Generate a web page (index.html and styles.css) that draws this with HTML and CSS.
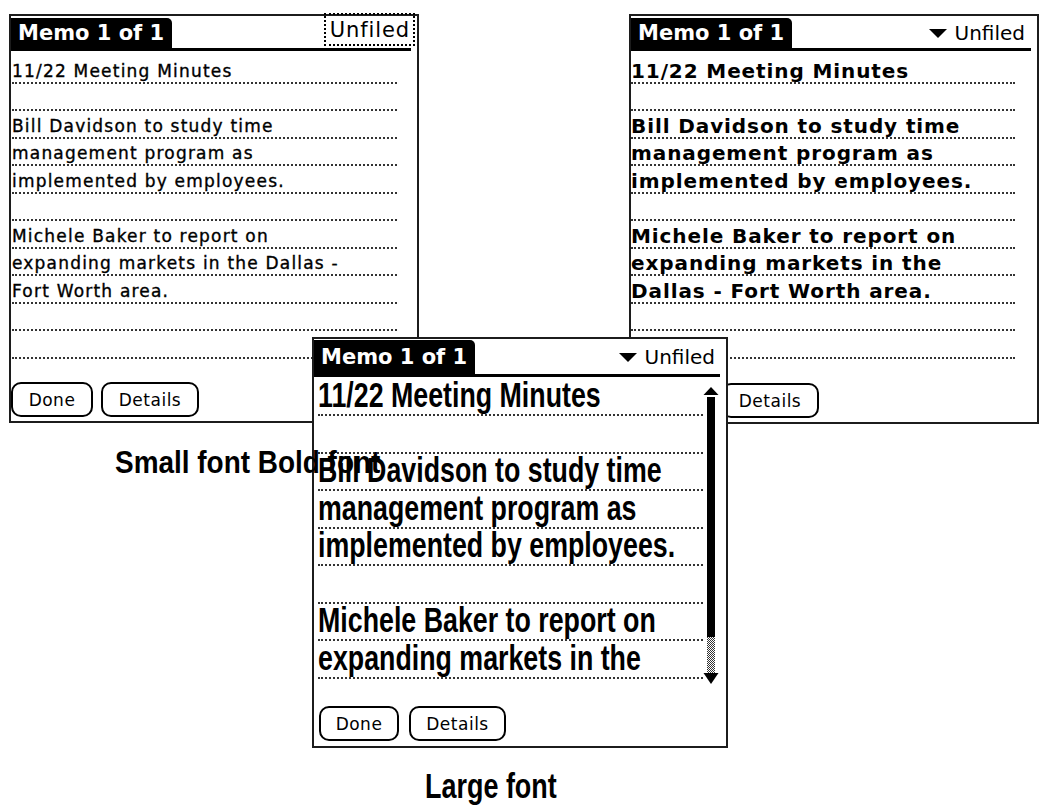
FILE: index.html
```html
<!DOCTYPE html>
<html lang="en">
<head>
<meta charset="utf-8">
<title>Memo fonts</title>
<link rel="stylesheet" href="styles.css">
</head>
<body>
<div class="canvas">

  <section class="screen screen-small">
    <header class="titlebar">
      <div class="tab">Memo 1 of 1</div>
      <div class="category focus">Unfiled</div>
    </header>
    <div class="body">
      <div class="lines">
        <div class="line"><span>11/22 Meeting Minutes</span></div>
        <div class="line"></div>
        <div class="line"><span>Bill Davidson to study time</span></div>
        <div class="line"><span>management program as</span></div>
        <div class="line"><span>implemented by employees.</span></div>
        <div class="line"></div>
        <div class="line"><span>Michele Baker to report on</span></div>
        <div class="line"><span>expanding markets in the Dallas -</span></div>
        <div class="line"><span>Fort Worth area.</span></div>
        <div class="line"></div>
        <div class="line"></div>
      </div>
      <div class="scroll"></div>
    </div>
    <footer class="buttons">
      <div class="btn btn-done">Done</div>
      <div class="btn btn-details">Details</div>
    </footer>
  </section>

  <section class="screen screen-bold">
    <header class="titlebar">
      <div class="tab">Memo 1 of 1</div>
      <div class="category"><span class="tri"></span>Unfiled</div>
    </header>
    <div class="body">
      <div class="lines">
        <div class="line"><span>11/22 Meeting Minutes</span></div>
        <div class="line"></div>
        <div class="line"><span>Bill Davidson to study time</span></div>
        <div class="line"><span>management program as</span></div>
        <div class="line"><span>implemented by employees.</span></div>
        <div class="line"></div>
        <div class="line"><span>Michele Baker to report on</span></div>
        <div class="line"><span>expanding markets in the</span></div>
        <div class="line"><span>Dallas - Fort Worth area.</span></div>
        <div class="line"></div>
        <div class="line"></div>
      </div>
      <div class="scroll"></div>
    </div>
    <footer class="buttons">
      <div class="btn btn-done">Done</div>
      <div class="btn btn-details">Details</div>
    </footer>
  </section>

  <section class="screen screen-large">
    <header class="titlebar">
      <div class="tab">Memo 1 of 1</div>
      <div class="category"><span class="tri"></span>Unfiled</div>
    </header>
    <div class="body">
      <div class="lines">
        <div class="line"><span>11/22 Meeting Minutes</span></div>
        <div class="line"></div>
        <div class="line"><span>Bill Davidson to study time</span></div>
        <div class="line"><span>management program as</span></div>
        <div class="line"><span>implemented by employees.</span></div>
        <div class="line"></div>
        <div class="line"><span>Michele Baker to report on</span></div>
        <div class="line"><span>expanding markets in the</span></div>
      </div>
      <div class="scroll">
        <svg width="16" height="310" viewBox="0 0 16 310" aria-hidden="true">
          <defs>
            <pattern id="grain" width="2" height="2" patternUnits="userSpaceOnUse">
              <rect width="2" height="2" fill="#fff"/>
              <rect width="1" height="1" fill="#333"/>
              <rect x="1" y="1" width="1" height="1" fill="#333"/>
            </pattern>
          </defs>
          <polygon points="8,8 0.5,16 15.5,16" fill="#000"/>
          <rect x="4" y="18" width="8" height="240" fill="#000"/>
          <rect x="4" y="258" width="8" height="36" fill="url(#grain)"/>
          <polygon points="0.5,294 15.5,294 8,305" fill="#000"/>
        </svg>
      </div>
    </div>
    <footer class="buttons">
      <div class="btn btn-done">Done</div>
      <div class="btn btn-details">Details</div>
    </footer>
  </section>

  <div class="label label-small">Small font Bold font</div>
  <div class="label label-large">Large font</div>

</div>
</body>
</html>
```

FILE: styles.css
```css
html, body {
  margin: 0;
  padding: 0;
  background: #fff;
}

body {
  font-family: "DejaVu Sans", "Liberation Sans", sans-serif;
  color: #000;
}

.canvas {
  position: relative;
  width: 1042px;
  height: 812px;
  overflow: hidden;
  background: #fff;
}

/* ---------- Palm screen ---------- */
.screen {
  position: absolute;
  box-sizing: border-box;
  display: flex;
  flex-direction: column;
  background: #fff;
  border: 2px solid #1c1c1c;
  z-index: 1;
}

.titlebar {
  display: flex;
  align-items: flex-end;
  height: 30px;
  margin: 2px 6px 0 0;
  border-bottom: 3px solid #000;
}

.tab {
  height: 30px;
  line-height: 31px;
  padding: 0 8px 0 7px;
  background: #000;
  color: #fff;
  font-family: "DejaVu Sans", sans-serif;
  font-weight: bold;
  font-size: 21px;
  border-radius: 0 5px 0 0;
  white-space: nowrap;
}

.category {
  margin-left: auto;
  padding-right: 6px;
  display: flex;
  align-items: center;
  gap: 8px;
  height: 30px;
  font-family: "DejaVu Sans", sans-serif;
  font-size: 20px;
  white-space: nowrap;
}

.category.focus {
  box-sizing: border-box;
  height: 33px;
  margin-right: -4px;
  margin-bottom: 2px;
  padding: 0 3px 0 4px;
  border: 2px dotted #000;
  font-size: 21px;
  letter-spacing: 0.9px;
}

.tri {
  width: 0;
  height: 0;
  border-left: 9px solid transparent;
  border-right: 9px solid transparent;
  border-top: 9px solid #000;
}

.body {
  display: flex;
  margin-top: 5px;
}

.lines {
  flex: 1;
  min-width: 0;
}

.line {
  box-sizing: border-box;
  height: var(--lh);
  display: flex;
  align-items: flex-end;
  border-bottom: 2px dotted #333;
  white-space: nowrap;
}

.line span {
  line-height: 1;
}

.scroll {
  width: var(--scroll-w);
  flex: none;
}

.buttons {
  display: flex;
  gap: 8px;
  margin-top: auto;
}

.btn {
  box-sizing: border-box;
  height: 35px;
  display: flex;
  align-items: center;
  justify-content: center;
  border: 2px solid #000;
  border-radius: 10px;
  font-family: "DejaVu Sans", sans-serif;
  font-size: 17px;
  letter-spacing: 0.5px;
}

.btn-done { width: 82px; }
.btn-details { width: 98px; }

/* small font screen */
.screen-small {
  left: 9px;
  top: 14px;
  width: 410px;
  height: 409px;
  --lh: 27.5px;
  --scroll-w: 20px;
}
.screen-small .lines { margin-left: 1px; }
.screen-small .line span {
  font-size: 17px;
  letter-spacing: 1.2px;
  margin-bottom: 2px;
  -webkit-text-stroke: 0.35px #000;
}
.screen-small .buttons { margin-bottom: 4px; }

/* bold font screen */
.screen-bold {
  left: 629px;
  top: 14px;
  width: 410px;
  height: 410px;
  --lh: 27.5px;
  --scroll-w: 22px;
}
.screen-bold .line span {
  font-size: 20px;
  font-weight: bold;
  letter-spacing: 0.9px;
  margin-bottom: 1px;
}
.screen-bold .buttons { margin-bottom: 4px; }

/* large font screen */
.screen-large {
  left: 312px;
  top: 337px;
  width: 416px;
  height: 411px;
  --lh: 37.5px;
  --scroll-w: 23px;
  z-index: 2;
}
.screen-large .titlebar {
  height: 34px;
  margin-top: 1px;
}
.screen-large .tab {
  height: 34px;
  line-height: 35px;
}
.screen-large .category {
  height: 34px;
  padding-right: 5px;
}
.screen-large .body { margin-top: 1.5px; }
.screen-large .lines { margin-left: 4px; }
.screen-large .line span {
  display: inline-block;
  font-family: "Liberation Sans", Arial, sans-serif;
  font-weight: bold;
  font-size: 35px;
  margin-bottom: 2px;
  transform: scaleX(0.765);
  transform-origin: left bottom;
}
.screen-large .buttons {
  margin-left: 5px;
  margin-bottom: 5px;
  gap: 10px;
}
.screen-large .btn-done { width: 80px; }
.screen-large .btn-details { width: 97px; }

/* ---------- captions ---------- */
.label {
  position: absolute;
  font-family: "Liberation Sans", Arial, sans-serif;
  font-weight: bold;
  line-height: 1;
  white-space: nowrap;
  transform-origin: left top;
  color: #000;
  z-index: 3;
}

.label-small {
  left: 115px;
  top: 446px;
  font-size: 32px;
  transform: scaleX(0.873);
}

.label-large {
  left: 425px;
  top: 768px;
  font-size: 35px;
  transform: scaleX(0.77);
}
```
